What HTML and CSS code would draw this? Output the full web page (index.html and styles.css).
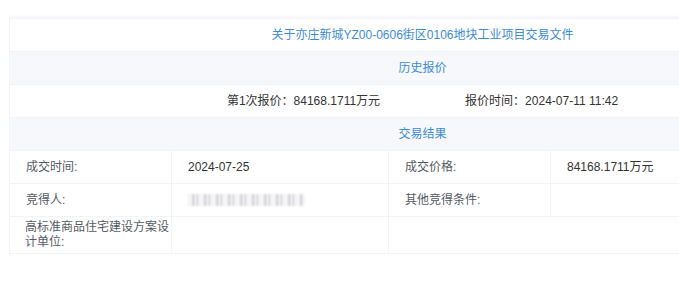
FILE: index.html
```html
<!DOCTYPE html>
<html lang="zh">
<head>
<meta charset="utf-8">
<link rel="stylesheet" href="styles.css">
</head>
<body>
<div class="viewport">
  <div class="page">
    <div class="topline"></div>
    <table class="deal">
      <colgroup>
        <col class="c1"><col class="c2"><col class="c3"><col class="c4">
      </colgroup>
      <tr class="row title-row">
        <td colspan="4" class="title">关于亦庄新城YZ00-0606街区0106地块工业项目交易文件</td>
      </tr>
      <tr class="row section">
        <td colspan="4">历史报价</td>
      </tr>
      <tr class="row">
        <td colspan="4" class="quote">
          <div class="quote-line">
            <span>第1次报价：84168.1711万元</span>
            <span>报价时间：2024-07-11 11:42</span>
          </div>
        </td>
      </tr>
      <tr class="row section">
        <td colspan="4">交易结果</td>
      </tr>
      <tr class="row">
        <td class="label">成交时间:</td>
        <td class="value">2024-07-25</td>
        <td class="label">成交价格:</td>
        <td class="value">84168.1711万元</td>
      </tr>
      <tr class="row">
        <td class="label">竞得人:</td>
        <td class="value"><span class="redacted" aria-label="已隐藏"></span></td>
        <td class="label">其他竞得条件:</td>
        <td class="value"></td>
      </tr>
      <tr class="row">
        <td class="label two">高标准商品住宅建设方案设计单位:</td>
        <td class="value"></td>
        <td colspan="2"></td>
      </tr>
    </table>
  </div>
</div>
</body>
</html>
```
FILE: styles.css
```css
html, body {
  margin: 0;
  padding: 0;
  background: #ffffff;
}
body {
  font-family: "Liberation Sans", "Noto Sans CJK SC", sans-serif;
  font-size: 12px;
  color: #333;
}
.viewport {
  width: 679px;
  height: 291px;
  overflow: hidden;
}
.page {
  padding: 14px 0 0 9px;
  width: 826px;
}
.topline {
  height: 4px;
  background: linear-gradient(#ffffff, #f6f7f9);
}
.deal {
  width: 826px;
  border-collapse: collapse;
  table-layout: fixed;
}
.c1 { width: 162px; }
.c2 { width: 217px; }
.c3 { width: 162px; }
.c4 { width: 285px; }
.deal td {
  height: 32px;
  padding: 0 16px;
  border: 1px solid #f1f3f6;
  vertical-align: middle;
  line-height: 15px;
}
.deal .title {
  text-align: center;
  color: #3d8bd6;
}
.section td {
  background: #f6f8fc;
  text-align: center;
  color: #3d8bd6;
}
.quote {
  text-align: center;
}
.quote-line {
  display: flex;
  justify-content: center;
  gap: 85px;
  color: #333;
}
.label {
  color: #555a63;
}
.deal .two {
  padding: 2px 0 2px 15px;
}
.value {
  color: #333;
}
.redacted {
  display: inline-block;
  width: 117px;
  height: 12px;
  vertical-align: middle;
  background:
    repeating-linear-gradient(90deg,
      #ececef 0 2px, #ffffff 2px 4px, #c4c6cb 4px 6px, #f4f5f7 6px 9px, #aeb0b5 9px 10px, #ffffff 10px 12px);
  filter: blur(1px);
}
```
